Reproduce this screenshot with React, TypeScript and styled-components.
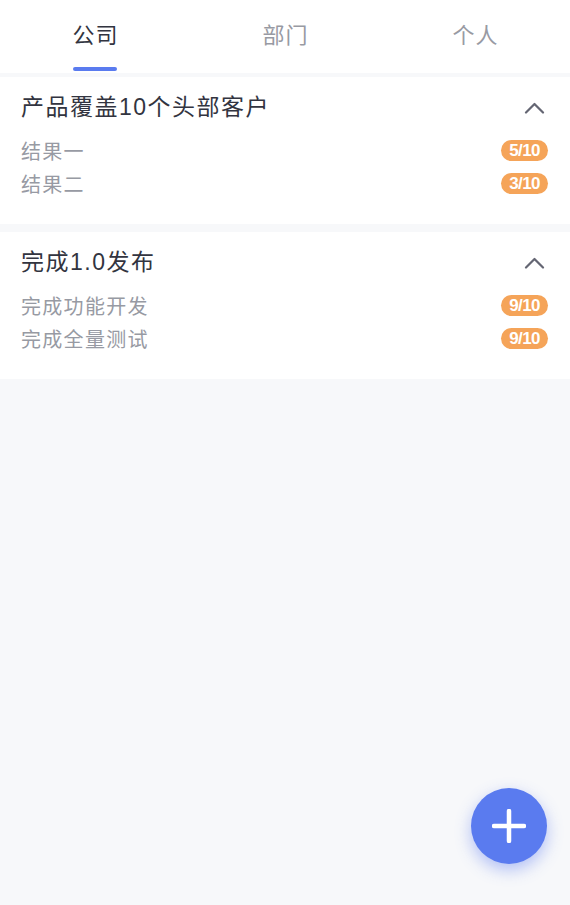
import React, { useState } from "react";
import styled, { createGlobalStyle } from "styled-components";

const GlobalStyle = createGlobalStyle`
  html, body {
    margin: 0;
    padding: 0;
    background: #f7f8fa;
    font-family: "Liberation Sans", "Noto Sans CJK SC", sans-serif;
    -webkit-font-smoothing: antialiased;
  }
  * { box-sizing: border-box; }
`;

const Page = styled.div`
  min-height: 100vh;
  background: #f7f8fa;
`;

const TabBar = styled.div`
  display: grid;
  grid-template-columns: repeat(3, 1fr);
  height: 73px;
  background: #ffffff;
`;

const Tab = styled.div`
  display: flex;
  flex-direction: column;
  align-items: center;
  padding-top: 21px;
  cursor: pointer;
`;

const TabLabel = styled.span<{ $active: boolean }>`
  font-size: 22px;
  line-height: 30px;
  letter-spacing: 1px;
  padding-left: 1px;
  color: ${(p) => (p.$active ? "#323440" : "#989aa3")};
`;

const TabIndicator = styled.span<{ $active: boolean }>`
  width: 44px;
  height: 4px;
  margin-top: 16px;
  border-radius: 2px;
  background: ${(p) => (p.$active ? "#5a7bef" : "transparent")};
`;

const CardList = styled.div`
  display: flex;
  flex-direction: column;
  gap: 8px;
  padding-top: 4px;
`;

const Card = styled.section`
  background: #ffffff;
  padding: 16px 22px 24px 21px;
`;

const CardHeader = styled.div`
  display: flex;
  align-items: center;
  justify-content: space-between;
  height: 28px;
`;

const CardTitle = styled.h2`
  margin: 0;
  font-size: 23px;
  font-weight: 400;
  line-height: 28px;
  letter-spacing: 1.5px;
  color: #323440;
`;

const Chevron = styled.svg`
  width: 21px;
  height: 13px;
  margin-right: 3px;
  color: #646673;
`;

const ItemList = styled.ul`
  list-style: none;
  margin: 13px 0 0;
  padding: 0;
`;

const Item = styled.li`
  display: flex;
  align-items: center;
  justify-content: space-between;
  height: 33px;
`;

const ItemName = styled.span`
  font-size: 20px;
  letter-spacing: 1.3px;
  color: #979aa3;
`;

const Badge = styled.span`
  display: inline-flex;
  align-items: center;
  justify-content: center;
  min-width: 47px;
  height: 21px;
  padding: 0 6px;
  border-radius: 11px;
  background: #f5a459;
  color: #ffffff;
  font-size: 17px;
  font-weight: 700;
  letter-spacing: -0.6px;
`;

const Fab = styled.button`
  position: fixed;
  right: 23px;
  bottom: 41px;
  width: 76px;
  height: 76px;
  border: none;
  border-radius: 50%;
  background: #5a7bef;
  box-shadow: 0 6px 16px rgba(90, 123, 239, 0.45);
  display: flex;
  align-items: center;
  justify-content: center;
  padding: 0;
  cursor: pointer;
`;

const tabs = ["公司", "部门", "个人"];

const objectives = [
  {
    title: "产品覆盖10个头部客户",
    results: [
      { name: "结果一", score: "5/10" },
      { name: "结果二", score: "3/10" },
    ],
  },
  {
    title: "完成1.0发布",
    results: [
      { name: "完成功能开发", score: "9/10" },
      { name: "完成全量测试", score: "9/10" },
    ],
  },
];

export default function App() {
  const [active, setActive] = useState(0);
  return (
    <Page>
      <GlobalStyle />
      <TabBar>
        {tabs.map((t, i) => (
          <Tab key={t} onClick={() => setActive(i)}>
            <TabLabel $active={i === active}>{t}</TabLabel>
            <TabIndicator $active={i === active} />
          </Tab>
        ))}
      </TabBar>
      <CardList>
        {objectives.map((o) => (
          <Card key={o.title}>
            <CardHeader>
              <CardTitle>{o.title}</CardTitle>
              <Chevron viewBox="0 0 21 13" fill="none">
                <path
                  d="M2 11.5 L10.5 3 L19 11.5"
                  stroke="currentColor"
                  strokeWidth="2.2"
                  strokeLinecap="round"
                  strokeLinejoin="round"
                />
              </Chevron>
            </CardHeader>
            <ItemList>
              {o.results.map((r) => (
                <Item key={r.name}>
                  <ItemName>{r.name}</ItemName>
                  <Badge>{r.score}</Badge>
                </Item>
              ))}
            </ItemList>
          </Card>
        ))}
      </CardList>
      <Fab aria-label="添加">
        <svg width="34" height="34" viewBox="0 0 34 34">
          <path
            d="M17 2 V32 M2 17 H32"
            stroke="#ffffff"
            strokeWidth="4.5"
            strokeLinecap="round"
          />
        </svg>
      </Fab>
    </Page>
  );
}
